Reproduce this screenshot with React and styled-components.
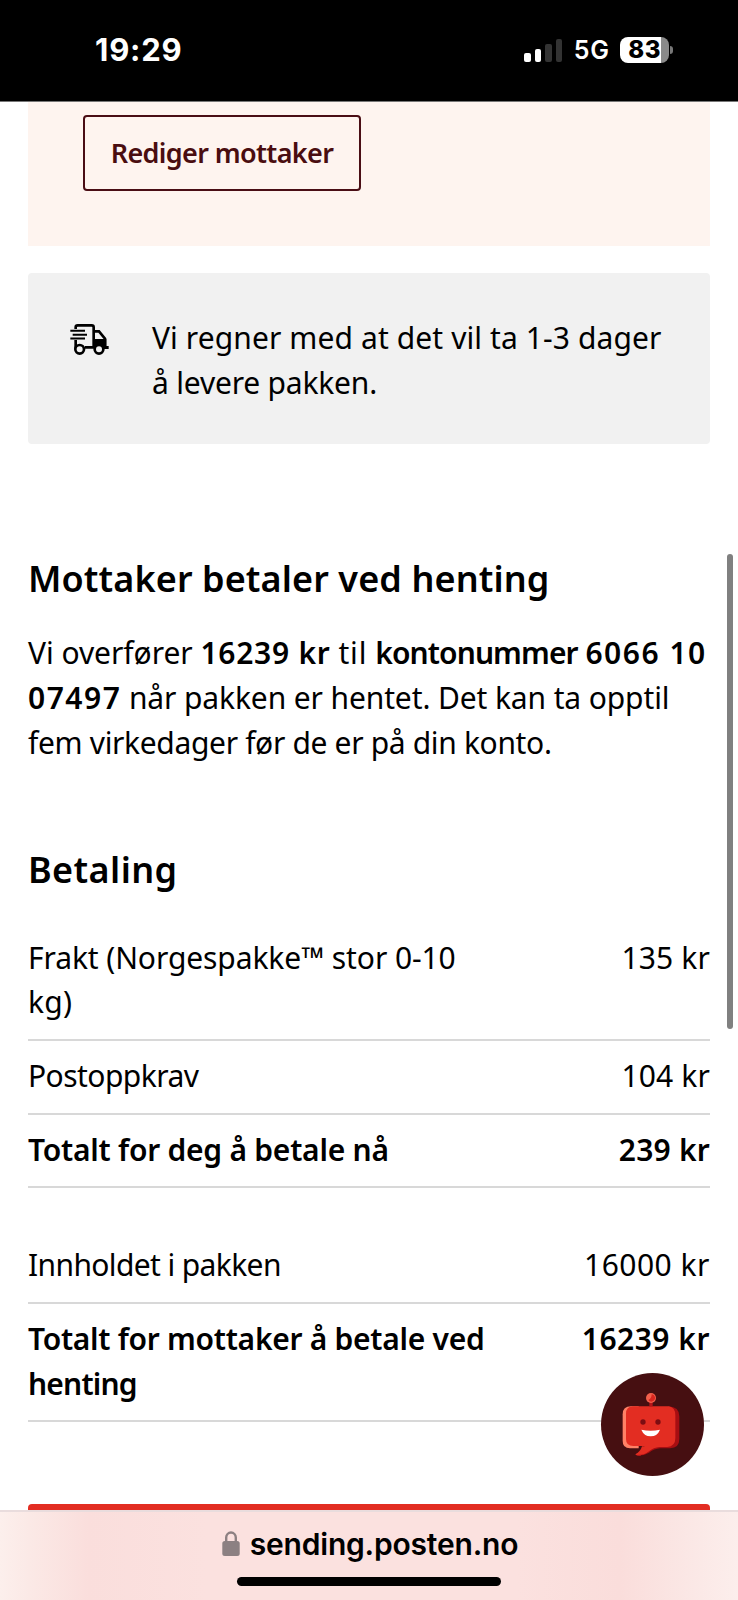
import React from "react";
import styled, { createGlobalStyle } from "styled-components";

const GlobalStyle = createGlobalStyle`
  * { box-sizing: border-box; }
  body { margin: 0; background: #fff; }
`;

const Phone = styled.div`
  position: relative;
  display: flex;
  flex-direction: column;
  width: 738px;
  height: 1600px;
  overflow: hidden;
  background: #fff;
  color: #000;
  font: 400 30px/44.8px "Noto Sans", "Open Sans", sans-serif;
`;

const StatusBar = styled.header`
  flex: none;
  display: flex;
  justify-content: space-between;
  align-items: center;
  height: 102px;
  padding: 0 65px 0 95px;
  border-bottom: 1px solid #777;
  background: #000;
  color: #fff;
  font-family: Inter, "Liberation Sans", sans-serif;
`;

const Clock = styled.time`
  font-size: 31px;
  font-weight: 700;
  letter-spacing: 0.8px;
`;

const Indicators = styled.div`
  display: flex;
  align-items: center;
`;

const Signal = styled.div`
  display: flex;
  align-items: flex-end;
  gap: 4px;
  height: 24px;
  margin-right: 11.5px;
`;

const SignalBar = styled.i`
  width: 6.5px;
  height: ${(p) => p.$height}px;
  border-radius: 2px;
  background: ${(p) => (p.$on ? "#fff" : "#333")};
`;

const Network = styled.span`
  font-size: 25px;
  font-weight: 600;
  letter-spacing: 0.6px;
  margin-right: 10.5px;
`;

const Battery = styled.div`
  display: flex;
  align-items: center;
  justify-content: center;
  width: 48.5px;
  height: 26px;
  padding-left: 1px;
  border-radius: 8px;
  background: linear-gradient(90deg, #fff 0 84%, #8a8a8a 84%);
  color: #000;
  font-size: 24px;
  font-weight: 800;
  line-height: 26px;
  letter-spacing: 0.6px;
`;

const BatteryTip = styled.i`
  width: 3px;
  height: 8px;
  margin-left: 1.5px;
  border-radius: 0 4px 4px 0;
  background: #777;
`;

const Main = styled.main`
  flex: none;
  height: 1408px;
  padding: 0 28px;
  overflow: hidden;
`;

const RecipientPanel = styled.section`
  height: 143.5px;
  padding: 13px 55px;
  background: #fef4ef;
`;

const EditButton = styled.button`
  display: block;
  width: 278px;
  height: 76px;
  padding: 0;
  border: 2px solid #4a0d14;
  border-radius: 4px;
  background: transparent;
  color: #4a0d10;
  font: 600 27px/44px "Noto Sans", "Open Sans", sans-serif;
  letter-spacing: -0.64px;
`;

const DeliveryInfo = styled.section`
  display: flex;
  align-items: flex-start;
  gap: 43px;
  height: 171px;
  margin-top: 27.5px;
  padding: 43px 42px 0;
  border-radius: 4px;
  background: #f1f1f1;
`;

const TruckSvg = styled.svg`
  flex: none;
  width: 39px;
  height: 31px;
  margin-top: 8px;
`;

const Heading = styled.h2`
  margin: ${(p) => p.$top}px 0 0;
  font-size: 36px;
  font-weight: 600;
  line-height: 44px;
  letter-spacing: ${(p) => p.$spacing}px;
`;

const Paragraph = styled.p`
  margin: 30px 0 0;
`;

const Line = styled.span`
  display: block;
  white-space: nowrap;
  letter-spacing: ${(p) => p.$spacing ?? -0.165}px;
`;

const Text = styled.span`
  letter-spacing: ${(p) => p.$spacing}px;
`;

const Strong = styled.strong`
  font-weight: 600;
  letter-spacing: ${(p) => p.$spacing}px;
`;

const PriceList = styled.div`
  margin-top: ${(p) => p.$top}px;
`;

const PriceRow = styled.div`
  display: flex;
  justify-content: space-between;
  padding: 13.5px 0;
  border-bottom: 2px solid #d8d8d8;
  font-weight: ${(p) => (p.$total ? 600 : 400)};
`;

const SubmitButton = styled.div`
  height: 76px;
  margin-top: 82px;
  border-radius: 4px;
  background: #e32d22;
`;

const BrowserBar = styled.footer`
  flex: none;
  display: flex;
  flex-direction: column;
  align-items: center;
  height: 90px;
  border-top: 2px solid #e9dcdd;
  background: linear-gradient(90deg, #fcefec 0, #fbe9e6 4%, #fadedc 12%, #fbe1df 28%, #fbe1df 70%, #fadddb 84%, #fbe8e6 94%, #fceeec 100%);
`;

const Address = styled.div`
  display: flex;
  align-items: center;
  gap: 10px;
  height: 65px;
  padding: 0 0 2px 2px;
  font: 600 30px/40px Inter, "Liberation Sans", sans-serif;
  letter-spacing: -0.2px;
`;

const LockSvg = styled.svg`
  width: 18px;
  height: 25px;
`;

const HomeIndicator = styled.i`
  width: 264px;
  height: 9px;
  border-radius: 5px;
  background: #000;
`;

const ScrollThumb = styled.div`
  position: absolute;
  top: 554px;
  right: 5px;
  width: 6px;
  height: 475px;
  border-radius: 3px;
  background: #808080;
`;

const ChatButton = styled.button`
  position: absolute;
  left: 600.5px;
  top: 1373px;
  width: 103px;
  height: 103px;
  padding: 0;
  border: 0;
  border-radius: 50%;
  background: #460f11;
  svg { display: block; width: 103px; height: 103px; }
`;

const Truck = () => (
  <TruckSvg viewBox="60 72 117 93" fill="none" stroke="#000" strokeWidth="8">
    <path d="M77 87V82Q77 76 83 76H125Q131 76 131 82V142H105M77 120V147" />
    <path d="M132 94H147L165 116V140" />
    <path d="M132 117H169V138H176V147H162A16 16 0 0 0 132 144Z" fill="#000" stroke="none" />
    <path d="M61 92H105M68 104H111M61 115.500H105" strokeWidth="6" />
    <circle cx="89" cy="148" r="13" fill="#f1f1f1" />
    <circle cx="147" cy="148" r="13" fill="#f1f1f1" />
  </TruckSvg>
);

const Robot = () => (
  <svg viewBox="32 39 309 309">
    <path d="M122 139H145V265H119Q97 265 97 243V163Q97 139 122 139Z" fill="#ff8166" />
    <path d="M155 259H180L150 287Q142 289 135 283Q151 274 155 259Z" fill="#e32d22" />
    <path d="M235 139Q267 141 267 169V237Q267 264 239 265H209Q192 266 176 278Q158 289 137 286Q167 278 183 258Z" fill="#a70e12" />
    <path d="M128 139H235Q255 142 255 166V235Q255 259 231 261H207Q191 262 174 275Q158 287 135 284Q157 275 163 258H129Q107 258 107 237V162Q107 139 128 139Z" fill="#e32d22" />
    <path d="M177 124H187V139H177Z" fill="#b51418" />
    <circle cx="182" cy="114" r="15" fill="#f2604c" />
    <path d="M184 103A11 11 0 1 1 174 120Q184 116 184 103Z" fill="#d9261f" />
    <circle cx="158" cy="186" r="8" fill="#7d0d12" />
    <circle cx="203" cy="186" r="8" fill="#7d0d12" />
    <path d="M153 209Q181 215 209 209Q201 229 181 229Q161 229 153 209Z" fill="#fff" />
  </svg>
);

const Lock = () => (
  <LockSvg viewBox="0 0 18 25">
    <path d="M4.200 11V6.500a4.800 5 0 0 1 9.600 0V11" fill="none" stroke="#8c8082" strokeWidth="2.400" />
    <rect x="0.300" y="10" width="17.400" height="15" rx="2.500" fill="#8c8082" />
  </LockSvg>
);

export default function App() {
  return (
    <Phone>
      <GlobalStyle />
      <StatusBar>
        <Clock>19:29</Clock>
        <Indicators>
          <Signal>
            <SignalBar $height={9} $on />
            <SignalBar $height={13} $on />
            <SignalBar $height={18} />
            <SignalBar $height={23} />
          </Signal>
          <Network>5G</Network>
          <Battery>83</Battery>
          <BatteryTip />
        </Indicators>
      </StatusBar>

      <Main>
        <RecipientPanel>
          <EditButton>Rediger mottaker</EditButton>
        </RecipientPanel>

        <DeliveryInfo>
          <Truck />
          <div>
            <Line $spacing={0.1}>Vi regner med at det vil ta 1-3 dager</Line>
            <Line $spacing={-0.2}>å levere pakken.</Line>
          </div>
        </DeliveryInfo>

        <Heading $top={113.2} $spacing={0.1}>Mottaker betaler ved henting</Heading>
        <Paragraph>
          <Line $spacing={-0.05}>
            Vi overfører <Strong $spacing={0.75}>16239 kr</Strong> <Text $spacing={0.9}>til</Text>{" "}
            <Strong $spacing={-0.9}>kontonummer</Strong> <Strong $spacing={1.5}>6066 10</Strong>
          </Line>
          <Line>
            <Strong $spacing={1.5}>07497</Strong>{" "}
            <Text $spacing={-0.12}>når pakken er hentet. Det kan ta opptil</Text>
          </Line>
          <Line $spacing={-0.34}>fem virkedager før de er på din konto.</Line>
        </Paragraph>

        <Heading $top={82.5} $spacing={0.4}>Betaling</Heading>
        <PriceList $top={30.1}>
          <PriceRow>
            <div>
              <Line $spacing={-0.1}>Frakt (Norgespakke™ stor 0-10</Line>
              <Line $spacing={0.3}>kg)</Line>
            </div>
            <Line $spacing={0.15}>135 kr</Line>
          </PriceRow>
          <PriceRow>
            <Line $spacing={-0.55}>Postoppkrav</Line>
            <Line $spacing={0.15}>104 kr</Line>
          </PriceRow>
          <PriceRow $total>
            <Line $spacing={-0.24}>Totalt for deg å betale nå</Line>
            <Line $spacing={0.2}>239 kr</Line>
          </PriceRow>
        </PriceList>
        <PriceList $top={41.4}>
          <PriceRow>
            <Line $spacing={-0.62}>Innholdet i pakken</Line>
            <Line $spacing={0.5}>16000 kr</Line>
          </PriceRow>
          <PriceRow $total>
            <div>
              <Line $spacing={-0.28}>Totalt for mottaker å betale ved</Line>
              <Line $spacing={-0.8}>henting</Line>
            </div>
            <Line $spacing={0.5}>16239 kr</Line>
          </PriceRow>
        </PriceList>
        <SubmitButton />
      </Main>

      <BrowserBar>
        <Address>
          <Lock />
          sending.posten.no
        </Address>
        <HomeIndicator />
      </BrowserBar>

      <ScrollThumb />
      <ChatButton aria-label="Chat">
        <Robot />
      </ChatButton>
    </Phone>
  );
}
